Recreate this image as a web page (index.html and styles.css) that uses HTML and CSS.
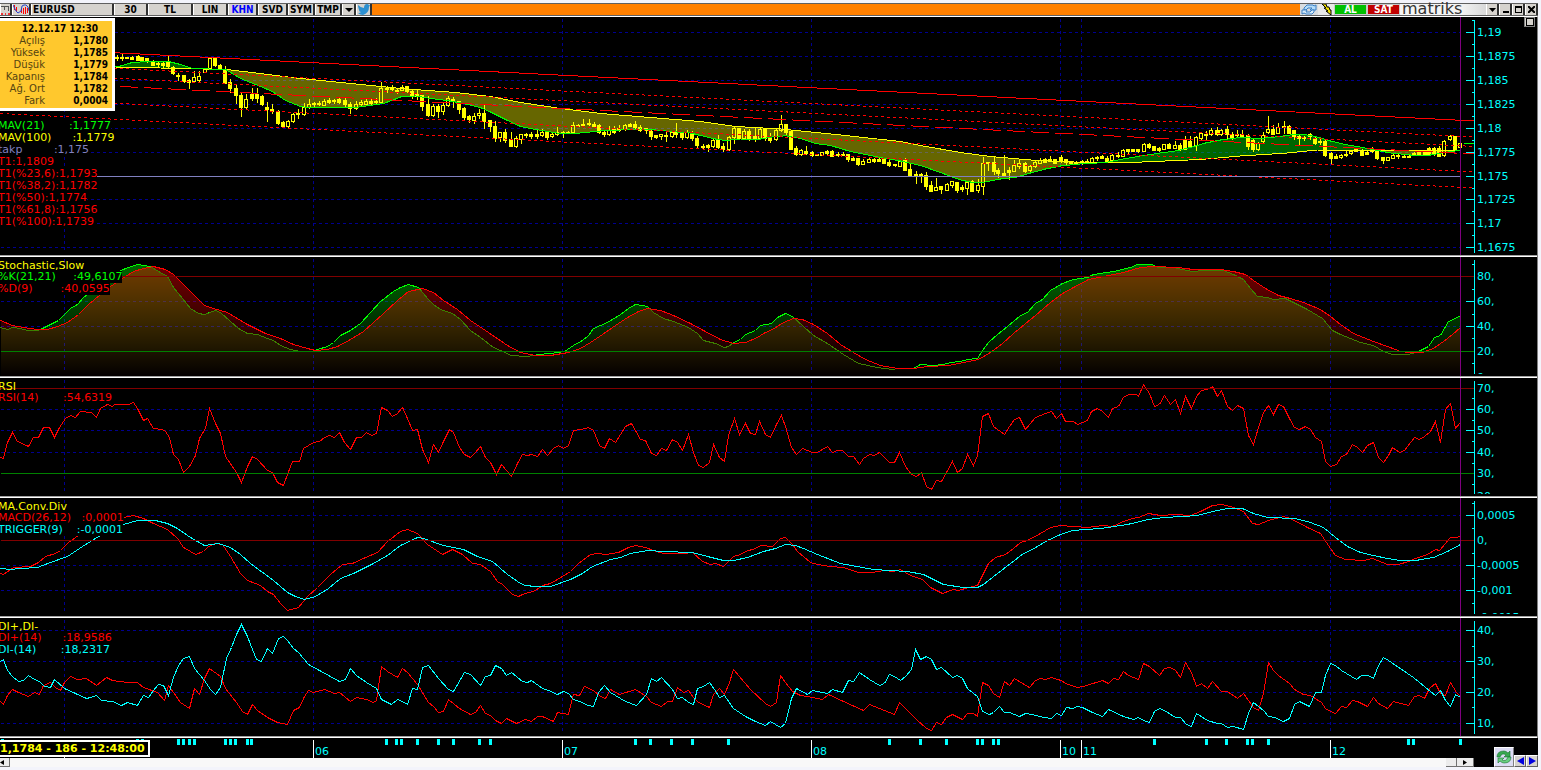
FILE: index.html
```html
<!DOCTYPE html>
<html lang="tr">

<head>
    <meta charset="UTF-8">
    <meta name="viewport" content="width=device-width, initial-scale=1.0">
    <title>EURUSD</title>
    <link rel="stylesheet" href="styles.css">
</head>

<body>
    <div class="window">
        <div class="toolbar">
            <button class="tool icon-grid" aria-label="Grafik">
                <svg width="10" height="11" viewBox="0 0 10 11"><path d="M0 2.5h8M3.5 3v3M7.5 3v4" stroke="#555" fill="none"/><path d="M0 9h2v2H0zM4 9h1v2H4zM7 9h2v2H7z" fill="#e33"/></svg>
            </button>
            <button class="tool icon-wave" aria-label="Formül">
                <svg width="16" height="11" viewBox="0 0 16 11"><path d="M1.500 1v5M3.500 3v5M8.500 5v4M10.500 4v6M12.500 3v7M14.500 4v5" stroke="#f00" fill="none"/><path d="M0 1l3 6 2 2 3-2 1-5 2-1h2l2 2 1 4" stroke="#2244cc" fill="none"/></svg>
            </button>
            <input class="tool symbol" type="text" value="EURUSD" aria-label="Sembol">
            <button class="tool period">30</button>
            <button class="tool currency">TL</button>
            <button class="tool lin">LIN</button>
            <button class="tool khn">KHN</button>
            <button class="tool svd">SVD</button>
            <button class="tool sym">SYM</button>
            <button class="tool tmp">TMP</button>
            <button class="tool drop" aria-label="Şablonlar"><svg width="8" height="4" viewBox="0 0 8 4"><path d="M0 0h8L4 4z"/></svg></button>
            <button class="tool twitter" aria-label="Twitter">
                <svg width="12" height="11" viewBox="0 0 12 11"><path d="M0 1q3 3 6 3 0-4 3-4 1 0 2 1h1l-1 2q0 6-6 8-3 0-5-2 2 0 3-1-2 0-2-2-1-3-1-5z" fill="#2b8fd0"/></svg>
            </button>
            <div class="caption"></div>
            <button class="flat reload" aria-label="Yenile">
                <svg width="16" height="11" viewBox="0 0 16 11"><path d="M3 6V4l3-3h6l1 1 2-1v5h-6l2-2H7L5 6z" fill="#b4dcfa" stroke="#3a7fc4"/><path d="M13 6v2l-2 2H5L3 9l-2 1V6h5L5 8h4l2-2z" fill="#d8eefc" stroke="#3a7fc4"/></svg>
            </button>
            <button class="flat bolt" aria-label="Uyarı">
                <svg width="12" height="11" viewBox="0 0 12 11"><path d="M2 0h4l1 3h2l1 3h1v5L6 7h2L4 4h2z" fill="#f0e000" stroke="#000"/></svg>
            </button>
            <button class="order buy">AL</button>
            <button class="order sell">SAT</button>
            <div class="brand"><span>matriks</span></div>
            <button class="tool winbtn" aria-label="Menü"><svg width="7" height="4" viewBox="0 0 7 4"><path d="M0 0h7L3.5 4z"/></svg></button>
            <button class="tool winbtn" aria-label="Küçült"><svg width="7" height="7" viewBox="0 0 7 7"><path d="M1 5h6v2H1z"/></svg></button>
            <button class="tool winbtn" aria-label="Büyüt"><svg width="7" height="7" viewBox="0 0 7 7"><path d="M0 0h7v7H0zM1 2v4h5V2z" fill-rule="evenodd"/></svg></button>
            <button class="tool winbtn" aria-label="Kapat"><svg width="7" height="7" viewBox="0 0 7 7"><path d="M0 0l7 7M7 0L0 7" stroke="#000" stroke-width="2"/></svg></button>
        </div>

        <div class="charts">
            <section class="panel price">
                <svg class="plot" id="price" viewBox="0 17 1476 238" preserveAspectRatio="none"></svg>
                <svg class="axis" id="priceAxis"></svg>
                <dl class="info">
                    <dt class="date">12.12.17 12:30</dt>
                    <dt>Açılış</dt><dd>1,1780</dd>
                    <dt>Yüksek</dt><dd>1,1785</dd>
                    <dt>Düşük</dt><dd>1,1779</dd>
                    <dt>Kapanış</dt><dd>1,1784</dd>
                    <dt>Ağ. Ort</dt><dd>1,1782</dd>
                    <dt>Fark</dt><dd>0,0004</dd>
                </dl>
                <div class="legend">
                    <p class="green">MAV(21)       :1,1777</p>
                    <p class="yellow">MAV(100)      :1,1779</p>
                    <p class="violet">takp         :1,175</p>
                    <p class="red">T1:1,1809</p>
                    <p class="red">T1(%23,6):1,1793</p>
                    <p class="red">T1(%38,2):1,1782</p>
                    <p class="red">T1(%50):1,1774</p>
                    <p class="red">T1(%61,8):1,1756</p>
                    <p class="red">T1(%100):1,1739</p>
                </div>
                <button class="restore" aria-label="Paneli büyüt"></button>
            </section>

            <section class="panel stoch">
                <svg class="plot" id="stoch" viewBox="0 257 1476 119" preserveAspectRatio="none">
                    <defs>
                        <linearGradient id="kFill" gradientUnits="userSpaceOnUse" x1="0" y1="262" x2="0" y2="374">
                            <stop offset="0" stop-color="#00ff00" stop-opacity="0.42"/>
                            <stop offset="1" stop-color="#00ff00" stop-opacity="0"/>
                        </linearGradient>
                        <linearGradient id="dFill" gradientUnits="userSpaceOnUse" x1="0" y1="262" x2="0" y2="374">
                            <stop offset="0" stop-color="#ff0000" stop-opacity="0.46"/>
                            <stop offset="1" stop-color="#ff0000" stop-opacity="0.02"/>
                        </linearGradient>
                    </defs>
                </svg>
                <svg class="axis" id="stochAxis"></svg>
                <div class="legend">
                    <h2>Stochastic,Slow</h2>
                    <p class="green">%K(21,21)     :49,6107</p>
                    <p class="red">%D(9)        :40,0595</p>
                </div>
            </section>

            <section class="panel">
                <svg class="plot" id="rsi" viewBox="0 378 1476 118" preserveAspectRatio="none"></svg>
                <svg class="axis" id="rsiAxis"></svg>
                <div class="legend">
                    <h2>RSI</h2>
                    <p class="red">RSI(14)       :54,6319</p>
                </div>
            </section>

            <section class="panel">
                <svg class="plot" id="macd" viewBox="0 498 1476 118" preserveAspectRatio="none"></svg>
                <svg class="axis" id="macdAxis"></svg>
                <div class="legend">
                    <h2>MA.Conv.Div</h2>
                    <p class="red">MACD(26,12)   :0,0001</p>
                    <p class="cyan">TRIGGER(9)    :-0,0001</p>
                </div>
            </section>

            <section class="panel">
                <svg class="plot" id="di" viewBox="0 618 1476 118" preserveAspectRatio="none"></svg>
                <svg class="axis" id="diAxis"></svg>
                <div class="legend">
                    <h2>DI+,DI-</h2>
                    <p class="red">DI+(14)      :18,9586</p>
                    <p class="cyan">DI-(14)       :18,2317</p>
                </div>
            </section>
        </div>

        <div class="footer">
            <div class="timeline">
                <svg class="days" id="days"></svg>
                <div class="last">1,1784 - 186 - 12:48:00</div>
            </div>
            <div class="scroll">
                <button class="scroll-btn left" aria-label="Geri"><svg width="4" height="5" viewBox="0 0 4 5"><path d="M4 0v5L0 2.5z"/></svg></button>
                <span class="track"></span>
                <button class="scroll-btn thumb" aria-label="Konum"></button>
                <button class="scroll-btn right" aria-label="İleri"><svg width="4" height="5" viewBox="0 0 4 5"><path d="M0 0v5l4-2.5z"/></svg></button>
            </div>
            <div class="pager">
                <button class="refresh" aria-label="Yenile">
                    <svg width="16" height="16" viewBox="0 0 16 16"><path d="M1 8q0-6 7-6 2 0 4 2l2-2v6H8l2-2Q6 3 4 8z" fill="#38a850" stroke="#187030" stroke-width=".6"/><path d="M15 8q0 6-7 6-2 0-4-2l-2 2V9h6l-2 2q4 2 6-3z" fill="#68d080" stroke="#187030" stroke-width=".6"/></svg>
                </button>
                <button class="page" aria-label="Önceki"><svg width="7" height="8" viewBox="0 0 7 8"><path d="M7 0v8L0 4z" fill="#0000e0"/></svg></button>
                <button class="page" aria-label="Sonraki"><svg width="7" height="8" viewBox="0 0 7 8"><path d="M0 0v8l7-4z" fill="#0000e0"/></svg></button>
            </div>
        </div>
    </div>

    <script src="charts.js"></script>
</body>

</html>
```

FILE: styles.css
```css
* {
    margin: 0;
    padding: 0;
    box-sizing: border-box;
}

body {
    background: #f3f4fb;
    font-family: "DejaVu Sans", Verdana, sans-serif;
    font-size: 11px;
    overflow: hidden;
}

button,
input {
    font-family: "DejaVu Sans Condensed", "DejaVu Sans", Verdana, sans-serif;
    font-size: 10px;
    font-weight: bold;
    line-height: 11px;
    color: #000;
    border: 0;
}

button svg {
    flex: none;
}

.window {
    margin: 3px 3px 0 0;
}

/* toolbar */
.toolbar {
    display: flex;
    height: 13px;
    border-top: 1px solid #606060;
    border-bottom: 1px solid #606060;
    background: #ff8000;
}

.tool {
    display: flex;
    align-items: center;
    justify-content: center;
    height: 11px;
    background: #d6d3ce;
    border-left: 1px solid #fff;
    border-right: 2px solid #303030;
    overflow: hidden;
}

.icon-grid { width: 12px; }
.icon-wave { width: 19px; }
.symbol { width: 83px; padding-left: 1px; }
.period { width: 34px; }
.currency { width: 45px; }
.lin { width: 35px; }
.khn { width: 30px; color: #0000ff; }
.svd { width: 30px; }
.sym { width: 27px; }
.tmp { width: 27px; }
.drop { width: 14px; }
.twitter { width: 16px; }

.caption {
    flex: 1;
}

.flat {
    display: flex;
    align-items: center;
    justify-content: center;
    width: 18px;
    height: 11px;
    background: #d8dce0;
    overflow: hidden;
}

.bolt {
    width: 16px;
    background: #e8e8e8;
}

.order {
    width: 33px;
    height: 11px;
    color: #fff;
    border: 1px solid #c8c8c8;
    line-height: 9px;
}

.buy { background: #00c000; }
.sell { background: #c00000; }

.brand {
    width: 86px;
    height: 11px;
    padding-left: 2px;
    background: linear-gradient(90deg, #f4f4f4 70%, #d8d8d8);
}

.brand span {
    display: block;
    width: max-content;
    font-size: 16px;
    line-height: 9px;
    color: #333;
}

.winbtn {
    width: 13px;
}

/* panels */
.charts {
    border-top: 1px solid #fff;
    border-right: 1px solid #808080;
}

.panel {
    position: relative;
    display: grid;
    grid-template-columns: 1fr 61px;
    height: 120px;
    padding-bottom: 1px;
    background: #a0a0a0;
    border-bottom: 1px solid #fff;
    overflow: hidden;
}

.panel.price { height: 240px; }
.panel.stoch { height: 121px; }

.plot,
.axis {
    display: block;
    width: 100%;
    height: 100%;
    background: #000;
}

.plot {
    shape-rendering: crispEdges;
}

.plot polyline {
    fill: none;
}

.axis text,
.days text {
    fill: #00ffff;
    font-size: 11px;
}

/* overlays on the plots */
.legend {
    position: absolute;
    top: 3px;
    left: -2px;
}

.price .legend {
    top: 103px;
}

.legend h2 {
    width: max-content;
    font-size: 11px;
    font-weight: normal;
    line-height: 11px;
    color: #ffff00;
}

.legend p {
    width: max-content;
    line-height: 12px;
    white-space: pre;
    background: #000;
}

.legend .green { color: #00ff00; }
.legend .yellow { color: #ffff00; }
.legend .violet { color: #8080c0; }
.legend .red { color: #ff0000; }
.legend .cyan { color: #00ffff; }

.info {
    position: absolute;
    top: 1px;
    left: 0;
    width: 115px;
    padding: 2px 4px 1px 0;
    display: grid;
    grid-template-columns: 45px 1fr;
    font-size: 10px;
    line-height: 12px;
    text-align: right;
    color: #554411;
    background: #ffc82d;
    border: 3px solid #fff;
    border-left: 0;
}

.info .date {
    grid-column: 1 / 3;
    padding-right: 10px;
}

.info .date,
.info dd {
    font-family: "DejaVu Sans Condensed", "DejaVu Sans", Verdana, sans-serif;
    font-weight: bold;
    color: #000;
}

.restore {
    position: absolute;
    top: 0;
    right: 2px;
    width: 11px;
    height: 10px;
    background: #d6d3ce;
    border: 1px solid #808080;
}

.restore::before {
    content: "";
    display: block;
    width: 6px;
    height: 6px;
    margin: 0 auto;
    border: 1px solid #000;
}

/* footer */
.footer {
    display: grid;
    grid-template-columns: 1fr 64px;
    grid-template-rows: 20px 9px;
    background: #000;
}

.timeline {
    position: relative;
    overflow: hidden;
}

.days {
    display: block;
    width: 100%;
    height: 20px;
    shape-rendering: crispEdges;
}

.last {
    position: absolute;
    top: 2px;
    left: -2px;
    width: 152px;
    height: 17px;
    border: 2px solid #fff;
    background: #000;
    color: #ffff00;
    font-weight: bold;
    line-height: 14px;
    white-space: nowrap;
}

.scroll {
    grid-row: 2;
    display: flex;
    background: #f8f8f8;
}

.track {
    flex: 1;
}

.scroll-btn {
    display: flex;
    align-items: center;
    justify-content: center;
    height: 9px;
    background: #ececec;
    border-right: 1px solid #707070;
    border-bottom: 1px solid #707070;
}

.scroll-btn.left { width: 10px; padding-right: 6px; }
.scroll-btn.thumb { width: 11px; }
.scroll-btn.right { width: 17px; }

.pager {
    grid-column: 2;
    grid-row: 1 / 3;
    display: flex;
    justify-content: flex-end;
    align-items: flex-end;
}

.refresh {
    display: flex;
    align-items: center;
    justify-content: center;
    width: 20px;
    height: 20px;
    background: #dcdcf4;
    border: 1px solid #fff;
    border-right-color: #808080;
    border-bottom-color: #808080;
}

.page {
    display: flex;
    align-items: center;
    justify-content: center;
    width: 12px;
    height: 12px;
    background: #d6d3ce;
    border: 1px solid #fff;
    border-right-color: #606060;
    border-bottom-color: #606060;
}
```

FILE: charts.js
```js
var NS = 'http://www.w3.org/2000/svg';
var dayLines = [64, 313, 562, 811, 1060, 1081, 1330];
var plotRight = 1460;
var axisX = 1474;

function add(parent, name, attrs, text) {
    var node = document.createElementNS(NS, name);
    for (var key in attrs) {
        node.setAttribute(key, attrs[key]);
    }
    if (text) {
        node.textContent = text;
    }
    parent.appendChild(node);
    return node;
}

function line(g, x1, y1, x2, y2, color, dash) {
    var attrs = { x1: x1, y1: y1, x2: x2, y2: y2, stroke: color };
    if (dash) {
        attrs['stroke-dasharray'] = dash;
    }
    return add(g, 'line', attrs);
}

function series(g, points, color) {
    add(g, 'polyline', { points: points, stroke: color });
}

function parse(points) {
    return points.trim().split(/\s+/).map(function (p) {
        return p.split(',').map(Number);
    });
}

function valueAt(list, x) {
    for (var i = 1; i < list.length; i++) {
        if (x <= list[i][0]) {
            var a = list[i - 1], b = list[i];
            return a[1] + (b[1] - a[1]) * (x - a[0]) / (b[0] - a[0]);
        }
    }
    return list[list.length - 1][1];
}

// colours the band between two averages by which one is on top
function band(g, fast, slow) {
    var f = parse(fast), s = parse(slow);
    for (var sign = -1; sign <= 1; sign += 2) {
        var top = [], bottom = [];
        for (var x = 115; x <= plotRight; x++) {
            var a = valueAt(f, x), b = valueAt(s, x);
            var on = (a - b) * sign > 0;
            top.push(x + ',' + b);
            bottom.unshift(x + ',' + (on ? a : b));
        }
        add(g, 'polygon', {
            points: top.concat(bottom).join(' '),
            fill: sign > 0 ? '#ffff00' : '#00ff00',
            'fill-opacity': 0.4
        });
    }
}

// redraws the parts of a line that run under another one
function under(g, points, cover, color) {
    var p = parse(points), c = parse(cover), run = [];
    for (var x = 0; x <= plotRight; x++) {
        var y = valueAt(p, x);
        if (y > valueAt(c, x)) {
            run.push(x + ',' + y);
        } else {
            if (run.length > 1) series(g, run.join(' '), color);
            run = [];
        }
    }
}

function area(g, points, base, fill) {
    add(g, 'polygon', { points: '0,' + base + ' ' + points + ' ' + plotRight + ',' + base, fill: fill });
}

// dashed grid
function frame(id, top, bottom, opt) {
    var svg = document.getElementById(id);
    var g = add(svg, 'g', { transform: 'translate(0.5 0.5)' });
    opt.grid.forEach(function (y) {
        line(g, 0.5, y, plotRight, y, '#000090', '3 3');
    });
    dayLines.forEach(function (x) {
        line(g, x, top + 1.5, x, bottom - 5, '#000090', '3 3');
    });
    return g;
}

// level lines, scale and its labels
function finish(id, g, top, bottom, opt) {
    (opt.levels || []).forEach(function (l) {
        line(g, 0, l[0], axisX, l[0], l[1]);
    });
    line(g, plotRight, top - 1, plotRight, bottom, '#800080');
    line(g, axisX, top + 2, axisX, bottom - 3, '#00ffff');
    opt.minor.forEach(function (y) {
        line(g, 1471, y, axisX, y, '#00ffff');
    });
    var axis = document.getElementById(id + 'Axis');
    var clip = add(axis, 'svg', { width: '100%', height: bottom - top - 2 });
    opt.labels.forEach(function (l) {
        if (l[0] < bottom - 3 && !l[2]) {
            line(g, 1465.5, l[0], axisX, l[0], '#00ffff');
        }
        add(clip, 'text', { x: 1, y: l[0] - top + 4 }, l[1]);
    });
}

/* price */
var mav100 = '0,64 115,66.5 226,69 247,71.5 300,78 350,83 400,88 455,92 490,96 520,102 560,108 600,113 650,117 700,121 735,126 780,128.5 840,134.5 900,141 920,145 960,152 990,156 1030,159.5 1060,161 1100,162.5 1130,162 1165,160.5 1200,159 1240,155.5 1287,152.5 1317,149.5 1360,149.5 1460,149.5';
var mav21 = '0,70 115,66.5 120,65.5 130,62.5 142,61.3 170,61.5 180,64 190,67.5 226,69.5 240,78 260,86 272,91 285,100 300,106 310,107.5 355,107 383,103 395,98.5 400,96.5 415,95.5 430,98 450,100.5 465,103.5 480,107 490,111.5 505,119 520,126 535,129 560,133 575,133 600,130.5 620,129.5 640,128.5 655,129.5 670,131 690,132.5 700,135 715,138.5 725,140 740,138.5 760,138.5 775,136 785,135.3 800,138 815,143 830,145 850,151 880,157 900,160.5 920,165 940,172 960,179.5 975,182.5 985,181.5 1000,178.5 1015,177 1030,172.5 1045,168.5 1060,165.5 1080,163.5 1105,162 1120,159 1140,155.5 1160,152.5 1175,150.5 1190,147 1205,142.5 1220,139.5 1240,137 1260,138 1275,136.5 1290,134.5 1305,134.3 1315,136 1330,140.5 1345,144 1362,147 1375,149.5 1390,152.5 1410,154.5 1430,154.5 1450,151 1460,150';

// x, high, body top, body bottom, low, 1 = hollow body
var candles = [
    [117,55,57,58,60],[122,54,57,58,60],[127,57,57,58,58],[132,56,57,59,59],[138,55,56,60,60],[142,57,57,60,61],
    [147,58,58,61,62],[153,60,61,65,65],[158,62,63,64,66],[163,62,63,65,67],[168,55,61,66,67],[173,66,67,73,74],
    [178,73,75,76,80],[184,75,75,81,82],[189,79,80,82,88],[194,71,77,81,82,1],[199,71,76,80,81,1],[205,68,69,72,72,1],
    [210,58,58,68,68,1],[215,57,58,65,66],[220,64,65,69,69],[225,66,69,83,83],[230,79,82,88,92],[236,84,88,95,103],
    [241,93,95,107,116],[246,94,99,107,109,1],[252,88,94,98,100],[257,88,94,98,102],[262,95,96,104,105],[267,102,107,109,121],
    [272,104,109,111,113],[278,110,111,123,124],[283,121,122,126,127],[288,120,121,126,127,1],[293,113,114,121,122,1],[298,109,113,114,118],
    [304,103,107,114,115,1],[309,99,104,107,108,1],[314,102,103,104,106],[319,101,103,104,105],[324,99,101,105,105,1],[329,98,100,102,103],
    [334,99,100,101,103],[339,98,99,102,103],[345,98,100,104,106],[350,102,104,108,113],[356,101,104,108,109,1],[361,100,102,104,105,1],
    [366,98,101,104,105,1],[371,98,101,103,105],[376,98,101,102,104],[381,82,88,102,102,1],[387,86,88,89,92],[392,85,88,89,90],
    [397,88,90,91,93],[402,85,87,90,90,1],[407,86,86,91,92],[412,90,91,96,98],[417,90,94,96,99],[422,95,95,106,110],
    [428,96,104,115,116],[433,104,106,115,116,1],[438,104,106,111,117],[443,103,105,111,114,1],[448,96,98,105,106,1],[453,97,99,101,107],
    [459,101,101,109,113],[464,107,108,117,119],[469,115,116,119,122],[474,113,116,120,123,1],[479,109,113,115,118,1],[484,105,113,121,128],
    [490,120,120,126,131],[495,121,126,138,141],[500,132,132,137,141,1],[505,129,132,140,142],[511,132,139,146,146],[516,136,138,146,147,1],
    [521,134,134,139,143,1],[526,133,134,135,137],[531,132,134,136,138],[537,130,134,136,138],[542,129,132,135,136,1],[547,131,132,137,139],
    [552,133,134,136,137,1],[557,127,132,134,135,1],[563,131,132,133,137],[568,131,132,133,133],[573,122,125,132,133,1],[578,124,125,126,126],
    [583,119,124,125,126],[589,119,123,124,125],[594,122,124,126,127],[599,124,125,132,133],[604,131,132,134,136],[609,126,130,134,135,1],
    [614,126,129,132,133],[619,125,128,130,131],[625,124,125,129,130,1],[630,123,124,126,126],[635,121,124,127,128],[640,125,127,130,131],
    [646,128,128,130,133],[651,130,131,136,139],[656,135,135,137,138],[661,134,134,136,139,1],[666,131,135,136,141],[672,131,132,136,137,1],
    [676,123,132,134,137],[682,132,133,137,139],[687,130,132,137,138,1],[692,131,133,138,140],[697,136,138,145,148],[703,144,146,147,148],
    [708,144,145,147,151],[713,138,140,146,147,1],[718,135,139,147,148],[723,143,146,149,151],[729,136,137,149,150,1],[734,126,128,137,143,1],
    [739,128,128,138,139],[744,129,131,138,139,1],[749,129,131,138,140],[755,128,136,138,141],[760,128,129,138,139,1],[765,128,129,138,140],
    [770,133,137,140,142],[776,128,130,139,140,1],[781,115,124,130,131,1],[786,124,124,132,135],[791,131,131,149,149],[796,146,148,154,155],
    [801,149,150,154,155,1],[806,146,151,153,154],[812,151,152,155,156],[817,154,154,155,155],[822,152,152,155,155,1],[827,150,151,153,154],
    [832,150,151,156,156],[838,152,154,155,156],[843,152,154,155,155],[848,154,154,159,161],[853,157,158,160,160],[858,158,158,164,165],
    [863,159,161,164,164,1],[869,158,159,162,162,1],[874,158,159,161,162],[879,158,159,161,161],[884,158,159,163,163],[889,160,162,165,166],
    [895,164,164,165,166],[900,160,161,166,166,1],[905,158,160,170,170],[910,163,169,175,175],[916,171,174,176,183],[921,173,174,175,182],
    [926,172,175,186,189],[931,181,185,191,191],[936,178,187,190,190,1],[941,186,186,189,193],[947,183,184,190,190,1],[952,181,181,185,187,1],
    [957,182,182,190,192],[962,185,187,189,191],[967,181,182,188,194,1],[972,180,181,191,191],[978,179,185,190,192,1],[983,157,163,186,194,1],
    [988,162,162,163,170],[994,157,162,171,174],[998,168,170,173,177],[1004,155,173,176,176],[1009,167,170,172,179],[1014,160,165,171,171,1],
    [1019,160,163,166,168,1],[1025,162,163,171,172],[1030,165,166,170,171,1],[1035,161,162,166,167,1],[1040,158,160,163,163,1],[1045,158,159,162,162],
    [1050,156,159,161,161],[1055,159,159,163,163],[1061,155,157,161,162],[1066,159,159,162,165],[1071,161,161,163,163],[1076,161,162,164,164],
    [1082,160,161,163,164],[1087,159,161,162,162],[1092,157,158,162,162,1],[1097,156,157,158,160],[1102,155,156,158,158],[1107,156,158,161,161],
    [1112,154,155,160,160,1],[1118,152,155,156,157],[1123,149,150,156,156,1],[1128,149,149,151,153],[1133,149,149,151,151],[1138,149,149,151,152],
    [1144,143,144,151,151,1],[1149,143,144,147,148],[1154,146,146,150,150],[1159,147,148,150,151],[1164,144,144,149,149,1],[1169,143,144,148,148],
    [1175,141,145,148,148,1],[1180,143,145,149,150],[1185,136,139,149,149],[1190,136,141,147,147],[1196,136,137,145,150,1],[1201,132,133,138,139,1],
    [1206,131,134,135,139],[1211,128,130,134,135,1],[1217,127,130,134,135],[1221,129,130,134,135,1],[1227,126,129,134,139],[1232,132,134,137,139],
    [1237,130,134,135,137],[1242,130,134,136,137],[1248,134,135,146,149],[1253,139,140,149,151],[1258,142,143,149,150,1],[1263,132,135,141,142,1],
    [1268,116,129,132,133,1],[1273,125,129,134,134],[1278,123,127,133,133,1],[1284,121,126,127,133],[1289,125,126,133,133],[1294,130,130,136,139],
    [1299,135,136,138,144],[1304,136,137,138,140],[1310,133,134,136,139],[1315,137,138,143,144],[1320,139,141,142,144],[1325,140,141,155,156],
    [1331,152,153,158,163],[1336,154,156,158,158],[1341,154,155,157,158,1],[1346,151,154,155,156],[1351,151,151,153,154,1],[1356,148,149,151,151],
    [1362,149,151,155,155],[1367,150,152,154,154],[1372,147,150,151,152],[1377,149,150,158,159],[1383,157,157,160,163],[1388,157,157,160,160,1],
    [1393,154,155,158,158,1],[1398,154,155,156,158],[1404,155,156,157,157],[1409,155,156,157,157],[1414,152,153,155,155],[1419,151,152,154,154],
    [1425,150,151,154,154],[1429,147,148,154,154],[1434,147,148,153,155],[1439,146,148,156,156],[1444,140,141,155,156,1],[1450,135,136,139,140,1],
    [1455,136,136,149,149],[1460,142,143,147,147,1]
];

var priceOpt = {
    grid: [32, 56, 80, 104, 128, 152, 199, 223, 247],
    minor: [20, 44, 68, 92, 116, 140, 164, 188, 211, 235],
    labels: [[32, '1,19'], [56, '1,1875'], [80, '1,185'], [104, '1,1825'], [128, '1,18'], [152, '1,1775'],
        [176, '1,175'], [199, '1,1725'], [223, '1,17'], [247, '1,1675']]
};
var g = frame('price', 17, 255, priceOpt);
band(g, mav21, mav100);
candles.forEach(function (c) {
    var x = c[0];
    line(g, x, c[1] - 0.5, x, c[2], '#ffff00');
    line(g, x, c[3], x, c[4] + 0.5, '#ffff00');
    if (c[5]) {
        add(g, 'rect', { x: x - 2, y: c[2], width: 3, height: c[3] - c[2], fill: 'none', stroke: '#ffff00' });
    } else {
        add(g, 'rect', { x: x - 2.5, y: c[2] - 0.5, width: 4, height: c[3] - c[2] + 1, fill: '#ffff00' });
    }
});
series(g, mav100, '#ffff00');
series(g, mav21, '#00ff00');
line(g, 0, 46.5, axisX, 120.5, '#ff0000');
line(g, 0, 62, axisX, 136.5, '#ff0000', '3 3');
line(g, 0, 72, axisX, 146, '#ff0000', '3 3');
line(g, 0, 80, axisX, 153.5, '#ff0000', '18 6');
line(g, 0, 97, axisX, 171.5, '#ff0000', '3 3');
line(g, 0, 113, axisX, 187.5, '#ff0000', '3 3');
line(g, 96, 176, plotRight, 176, '#8080c0');
finish('price', g, 17, 255, priceOpt);
line(g, 1463, 143, 1473, 143, '#00ff00');

/* stochastic */
var pctK = '0,327 7,329 12,327 20,328 27,330 37,330 42,328 50,324 58,320 63,315 70,308 77,304 83,297 93,289 105,280 120,270 128,267 137,264 150,266 158,271 167,276 173,287 182,298 190,308 198,313 204,314 215,310 220,312 230,321 238,328 247,333 257,334 267,338 273,340 280,345 290,349 300,351 312,351 317,349 327,346 333,342 340,335 350,330 360,323 370,312 380,301 393,291 400,287 408,284 418,287 427,298 433,304 440,309 452,313 460,319 470,330 480,337 493,347 507,353 510,355 527,356 538,354 550,353 564,351 573,345 582,340 588,335 593,328 607,322 620,314 628,308 635,304 647,306 653,312 663,318 673,321 688,327 697,333 703,340 715,343 724,347 728,346 733,342 740,339 745,334 755,330 760,325 771,323 777,317 785,313 792,316 803,326 813,335 827,343 843,354 858,363 877,367 892,369 898,368 913,368 920,364 932,365 943,364 950,362 960,361 967,359 977,358 982,350 988,342 997,334 1007,326 1020,315 1027,312 1035,303 1042,299 1050,290 1062,283 1073,279 1087,277 1093,274 1113,271 1130,267 1137,264 1152,264 1157,267 1173,267 1182,269 1192,271 1203,270 1223,270 1233,274 1243,279 1250,288 1257,296 1267,297 1273,299 1285,298 1293,302 1307,309 1322,318 1332,330 1340,334 1360,342 1373,345 1383,351 1392,354 1408,354 1418,351 1428,346 1434,337 1440,335 1448,321 1455,318 1460,315';
var pctD = '0,320 12,325 23,327 37,329 47,329 57,326 67,322 78,314 88,304 100,294 110,286 125,276 133,271 143,268 153,266 165,269 173,274 183,284 195,296 204,305 213,308 227,312 245,323 265,333 280,338 293,344 307,348 315,350 327,349 337,346 350,339 363,331 373,322 383,313 397,300 408,291 422,288 433,292 443,300 457,309 470,320 485,330 507,345 520,352 535,355 550,355 568,352 580,348 590,342 602,334 615,325 627,317 638,311 647,308 660,310 673,315 690,323 703,330 720,339 733,343 745,342 757,337 763,333 772,329 783,322 793,318 802,319 813,324 827,333 840,344 853,352 865,359 880,365 897,368 913,368 927,366 948,365 963,362 978,359 990,352 1002,343 1013,333 1030,319 1035,315 1050,302 1062,293 1073,287 1088,279 1103,276 1123,272 1140,267 1153,266 1177,267 1193,269 1220,269 1233,271 1245,274 1253,280 1265,288 1278,295 1290,298 1303,302 1320,309 1330,316 1340,324 1353,333 1373,341 1387,346 1400,351 1410,352 1422,352 1433,348 1443,341 1452,334 1460,327';
var stochOpt = {
    grid: [301, 326],
    minor: [264, 289, 314, 338, 363],
    levels: [[276, '#800000'], [351, '#008000']],
    labels: [[276, '80,', 1], [301, '60,'], [326, '40,'], [351, '20,', 1], [377, '0,']]
};
g = frame('stoch', 257, 376, stochOpt);
area(g, pctK, 376, 'url(#kFill)');
area(g, pctD, 376, 'url(#dFill)');
series(g, pctK, '#00ff00');
under(g, pctK, pctD, '#3c8000');
series(g, pctD, '#ff0000');
finish('stoch', g, 257, 376, stochOpt);

/* rsi */
var rsi = '0,457 3,458 7,442 12,432 17,441 28,446 33,437 38,437 43,427 49,427 54,437 59,427 65,418 70,415 75,417 80,411 91,412 96,417 100,408 107,404 112,406 114,404 128,404 133,402 137,408 143,420 147,418 153,428 162,429 165,431 169,437 173,454 178,459 183,472 189,466 195,455 199,438 205,428 209,408 215,423 220,433 225,456 236,472 241,482 247,466 252,456 257,459 267,470 272,472 277,482 283,485 287,474 292,461 299,461 303,448 313,442 319,441 324,437 329,435 334,437 339,432 344,442 350,449 356,437 361,437 366,432 371,435 376,433 381,407 387,410 392,416 397,413 402,407 407,418 412,430 417,429 422,449 428,462 433,444 438,452 443,441 449,429 453,432 459,447 464,454 470,457 475,452 480,446 485,457 490,462 496,474 501,464 506,470 511,476 517,463 522,454 527,455 531,454 537,456 542,449 547,455 553,448 558,445 563,448 568,445 573,430 581,429 588,427 593,430 599,445 604,448 609,438 615,442 625,426 631,423 640,439 645,440 651,453 656,455 661,448 666,450 672,439 677,442 682,450 688,434 693,452 698,465 703,467 709,462 713,444 719,457 724,461 728,435 734,418 739,434 745,423 750,433 755,434 759,421 765,434 770,437 776,424 781,415 785,426 791,447 796,454 802,448 812,452 817,452 827,446 832,452 837,450 842,450 848,456 853,456 859,464 863,458 869,454 874,455 879,452 889,462 894,462 899,452 905,466 911,474 916,476 921,472 926,486 931,489 936,480 941,481 946,472 952,461 957,472 962,468 967,454 973,465 977,455 982,416 988,413 993,426 1004,434 1009,426 1014,419 1019,417 1025,429 1035,417 1045,413 1051,411 1056,418 1061,413 1065,421 1073,421 1077,424 1087,420 1091,411 1097,408 1102,411 1108,417 1112,408 1118,406 1123,397 1128,394 1136,394 1138,396 1143,384 1149,393 1154,406 1159,404 1164,395 1170,404 1175,399 1180,413 1185,396 1191,408 1196,396 1201,390 1207,389 1212,386 1217,396 1221,390 1227,406 1232,410 1237,405 1243,408 1248,435 1253,444 1258,427 1263,412 1268,405 1273,414 1278,404 1283,406 1289,418 1294,427 1299,429 1305,426 1310,429 1315,437 1321,441 1325,461 1330,466 1336,464 1341,456 1346,454 1352,444 1357,447 1362,452 1367,445 1373,442 1378,457 1383,462 1388,455 1392,447 1399,452 1404,450 1414,437 1419,439 1424,436 1430,431 1435,421 1440,442 1445,409 1450,403 1455,428 1460,422';
var rsiOpt = {
    grid: [409, 430, 452],
    minor: [398, 420, 441, 463, 484],
    levels: [[388, '#800000'], [473, '#008000']],
    labels: [[388, '70,', 1], [409, '60,'], [430, '50,'], [452, '40,'], [473, '30,', 1], [496, '20,']]
};
g = frame('rsi', 378, 496, rsiOpt);
series(g, rsi, '#ff0000');
finish('rsi', g, 378, 496, rsiOpt);

/* macd */
var macd = '0,573 3,574 13,567 30,566 38,562 45,556 55,553 60,550 68,542 78,535 90,528 105,520 123,517 133,515 143,518 153,523 167,529 177,538 183,547 190,551 195,554 203,551 208,546 215,543 222,544 230,556 240,573 247,580 260,585 267,591 273,594 280,603 287,610 298,607 307,596 317,587 330,574 342,564 352,563 365,557 377,552 387,541 400,531 407,529 417,533 427,544 442,554 452,549 462,554 472,563 480,564 490,571 497,581 502,584 512,594 518,596 522,594 535,590 542,585 550,583 562,576 570,571 578,563 590,554 597,553 605,554 618,552 628,547 635,545 645,547 653,550 663,553 683,553 692,552 702,561 710,564 715,563 723,566 733,556 740,554 745,551 755,548 760,545 772,546 780,538 785,537 792,544 797,551 810,562 817,564 830,566 843,567 858,572 872,572 883,570 893,571 900,569 910,575 922,579 930,587 942,593 953,589 958,590 968,587 977,585 982,575 988,563 995,557 1005,554 1013,548 1020,542 1027,540 1040,533 1050,527 1060,525 1073,526 1087,527 1102,525 1112,526 1123,521 1132,518 1138,517 1148,513 1160,515 1175,514 1190,515 1200,511 1212,505 1222,504 1233,507 1243,511 1252,523 1258,524 1268,520 1283,516 1290,518 1307,527 1320,533 1330,548 1335,555 1345,559 1363,560 1372,558 1387,564 1398,564 1408,561 1415,558 1427,554 1435,549 1439,550 1450,537 1457,537 1460,535';
var trigger = '0,568 10,569 20,568 37,567 50,562 67,556 82,546 90,541 100,535 123,524 137,520 155,520 167,523 177,528 190,537 204,545 218,543 230,547 240,554 250,563 273,580 287,592 295,596 304,599 315,596 328,588 340,578 353,573 373,563 387,555 400,545 417,537 423,538 443,545 463,549 477,556 492,561 507,574 520,583 525,585 535,586 550,586 570,579 582,573 592,566 610,559 620,557 630,553 647,550 663,551 692,552 707,556 723,560 733,560 747,557 763,551 775,548 785,544 795,545 803,548 817,554 840,563 873,569 907,571 923,574 943,584 963,587 977,587 983,584 997,573 1010,563 1023,553 1030,550 1047,540 1060,534 1072,530 1100,528 1127,524 1148,519 1163,517 1182,516 1197,515 1212,511 1227,508 1242,508 1253,513 1267,517 1295,518 1310,522 1323,527 1335,537 1347,546 1360,552 1373,555 1387,558 1400,560 1415,560 1433,557 1447,551 1460,544';
var macdOpt = {
    grid: [515, 565, 590],
    minor: [503, 528, 553, 578, 603],
    levels: [[540, '#800000']],
    labels: [[515, '0,0005'], [540, '0,', 1], [565, '-0,0005'], [590, '-0,001'], [617, '-0,0015']]
};
g = frame('macd', 498, 616, macdOpt);
series(g, macd, '#ff0000');
series(g, trigger, '#00ffff');
finish('macd', g, 498, 616, macdOpt);

/* directional index */
var diPlus = '0,701 3,704 7,695 12,689 18,692 28,696 34,692 39,694 43,685 50,682 55,687 60,690 64,682 70,676 77,679 86,678 96,685 106,677 112,680 127,682 137,682 143,687 157,692 164,700 168,685 173,692 180,702 189,708 194,688 199,694 204,678 209,668 220,676 225,688 236,702 242,711 247,714 252,704 257,710 267,717 277,722 287,724 293,710 299,707 304,696 308,690 313,692 324,689 334,693 339,692 350,701 356,697 366,699 373,702 376,700 381,666 387,671 397,677 402,668 407,672 417,684 428,702 433,706 438,712 443,711 448,699 459,708 470,714 475,712 480,705 485,713 490,715 495,720 501,723 506,718 516,723 525,719 531,721 537,716 542,716 553,721 557,712 568,714 573,694 579,695 584,686 593,690 600,696 605,698 610,689 619,694 635,689 646,696 651,702 661,706 667,701 672,701 677,687 683,692 688,690 693,697 698,702 709,707 713,694 719,688 724,694 729,682 733,669 750,689 765,703 770,706 776,702 780,675 785,682 792,691 800,695 807,696 822,699 828,694 843,701 863,710 869,704 894,714 899,702 916,719 926,728 931,730 936,722 941,724 946,717 952,714 962,719 967,713 973,713 977,716 982,682 988,685 993,693 999,697 1004,681 1009,685 1014,678 1022,683 1029,687 1035,680 1040,678 1045,679 1051,677 1057,679 1061,680 1065,683 1077,687 1083,686 1102,680 1108,683 1113,678 1118,679 1123,671 1128,675 1138,679 1143,663 1149,666 1159,675 1164,668 1170,667 1175,670 1180,677 1185,662 1191,672 1196,686 1201,683 1207,688 1212,681 1221,691 1227,691 1237,698 1243,693 1248,700 1253,707 1258,710 1263,693 1268,662 1273,670 1278,675 1289,683 1294,689 1303,694 1310,695 1321,702 1325,708 1330,711 1335,713 1341,706 1346,707 1352,700 1357,701 1367,706 1373,697 1378,703 1387,708 1393,701 1408,705 1414,696 1419,695 1424,698 1429,688 1435,683 1440,693 1445,695 1450,682 1456,692 1460,696';
var diMinus = '0,661 3,659 7,670 12,676 18,681 23,680 28,675 34,679 39,681 44,686 50,687 54,679 64,688 75,693 86,698 90,697 96,695 101,700 112,701 121,705 127,702 137,705 143,695 148,697 153,690 158,684 163,685 168,695 173,677 178,665 183,658 189,656 194,668 204,680 210,689 215,694 220,687 226,658 231,647 236,634 241,624 247,636 252,649 256,659 261,661 267,648 272,653 278,638 283,636 287,640 293,648 298,652 308,664 319,670 339,681 345,679 350,668 356,675 366,682 376,688 381,699 391,704 397,699 402,701 407,704 412,688 417,689 422,667 428,665 438,678 448,689 453,691 464,672 470,674 480,685 485,676 490,675 495,665 501,668 506,675 511,672 522,681 527,682 531,680 542,688 548,690 557,694 563,691 568,693 573,699 579,701 588,705 593,706 598,692 604,685 610,692 625,701 636,705 646,694 651,678 656,681 661,677 672,689 677,698 682,697 688,702 693,704 697,688 703,686 709,682 714,689 719,697 724,695 733,708 745,716 755,721 765,725 770,721 780,727 785,723 791,698 796,688 807,694 812,690 827,693 832,689 842,692 848,680 853,681 859,672 869,679 879,685 884,683 889,674 894,676 900,680 905,676 911,669 915,649 920,659 926,656 931,659 936,669 941,667 952,677 957,675 962,678 967,688 973,693 977,696 982,711 989,714 993,712 999,706 1004,712 1009,712 1019,716 1025,713 1032,714 1043,717 1051,718 1056,713 1061,715 1066,707 1072,708 1077,706 1082,707 1092,712 1102,716 1108,709 1123,716 1133,719 1138,717 1143,720 1149,722 1154,711 1159,708 1164,710 1175,717 1180,717 1186,724 1191,726 1196,713 1207,720 1217,723 1221,723 1227,727 1233,726 1243,729 1248,713 1253,702 1263,710 1268,716 1274,717 1283,721 1289,718 1294,704 1299,701 1309,706 1315,692 1321,692 1325,675 1330,663 1335,665 1341,670 1356,679 1361,675 1368,675 1373,678 1378,665 1383,657 1388,660 1413,677 1430,691 1435,695 1440,690 1445,700 1450,706 1455,694 1460,697';
var diOpt = {
    grid: [630, 661, 692, 723],
    minor: [646, 677, 707],
    labels: [[630, '40,'], [661, '30,'], [692, '20,'], [723, '10,']]
};
g = frame('di', 618, 736, diOpt);
series(g, diPlus, '#ff0000');
series(g, diMinus, '#00ffff');
finish('di', g, 618, 736, diOpt);

/* day scale and news marks */
var days = document.getElementById('days');
var dayNames = ['', '06', '07', '08', '10', '11', '12'];
var news = [2, 137, 142, 178, 183, 189, 194, 225, 230, 235, 247, 251, 386, 396, 401, 417, 438, 453, 479, 490, 635, 650, 671, 692,
    728, 889, 920, 946, 977, 982, 993, 998, 1154, 1206, 1226, 1247, 1252, 1268, 1408, 1413, 1460];

function drawDays() {
    var k = days.clientWidth / 1474;
    days.textContent = '';
    dayLines.forEach(function (x, i) {
        add(days, 'rect', { x: Math.round(x * k), y: 2, width: 1, height: 18, fill: '#fff' });
        add(days, 'text', { x: Math.round(x * k) + 2, y: 17 }, dayNames[i]);
    });
    news.forEach(function (x) {
        add(days, 'rect', { x: Math.round(x * k) - 1, y: 1, width: 3, height: 6, fill: '#00ffff' });
    });
}

drawDays();
window.onresize = drawDays;
```
